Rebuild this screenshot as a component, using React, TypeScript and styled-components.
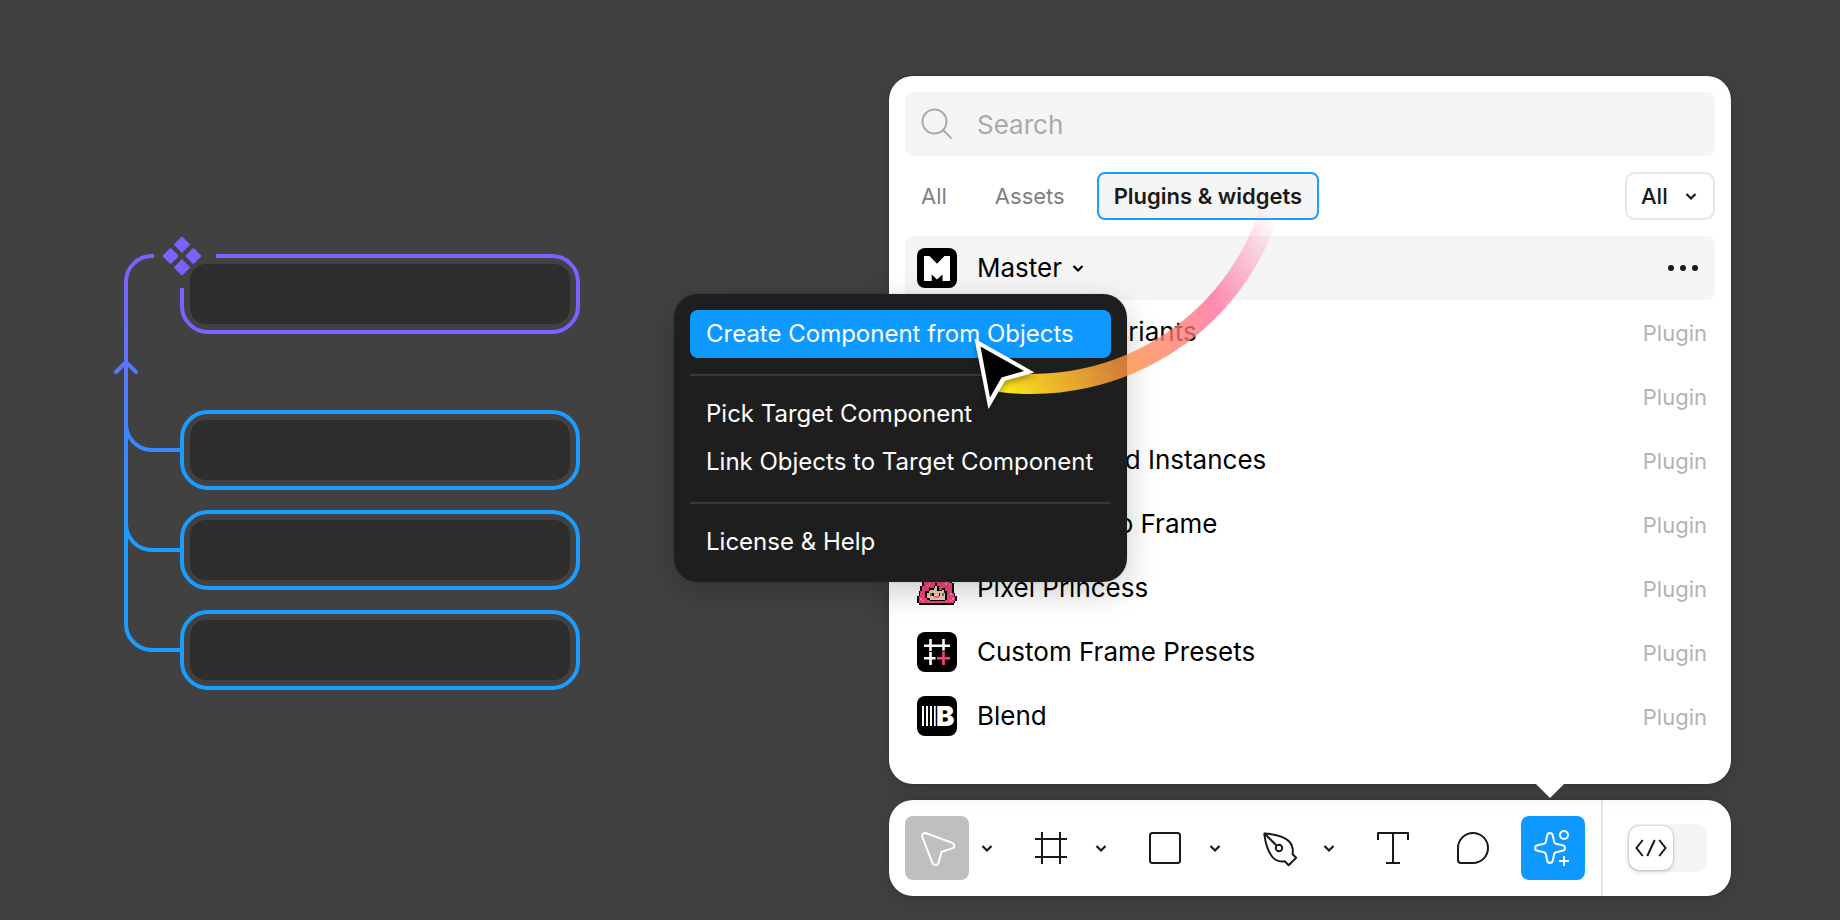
import React from "react";
import styled, { createGlobalStyle, css } from "styled-components";

const GlobalStyle = createGlobalStyle`
  *, *::before, *::after { box-sizing: border-box; }
  body {
    margin: 0;
    background: #414141;
    font-family: Inter, "Liberation Sans", sans-serif;
    color: #000;
  }
  button, input, select { font: inherit; color: inherit; }
`;

const Page = styled.main`
  display: grid;
  grid-template-columns: minmax(0, 466px) minmax(0, 842px);
  justify-content: space-between;
  align-items: start;
  min-height: 100vh;
  padding: 76px 109px 24px 114px;
`;

/* ---------- component tree ---------- */

const Tree = styled.section`
  display: flex;
  margin-top: 160px;
`;

const Connectors = styled.svg`
  flex: none;
  width: 66px;
  height: 454px;
`;

const Instances = styled.div`
  flex: 1;
  display: flex;
  flex-direction: column;
  gap: 20px;
  padding-top: 18px;
`;

const Outline = styled.div<{ $main?: boolean }>`
  position: relative;
  height: 80px;
  padding: 6px;
  border: 4px solid #1a9dff;
  border-radius: 28px;

  ${(p) =>
    p.$main &&
    css`
      margin-bottom: 56px;
      border-color: #7b61ff;

      &::before {
        content: "";
        position: absolute;
        left: -4px;
        top: -4px;
        width: 36px;
        height: 34px;
        background: #414141;
      }
    `}
`;

const Slot = styled.div`
  position: relative;
  height: 60px;
  border-radius: 16px;
  background: #2e2e2e;
`;

const ComponentMark = styled.svg`
  position: absolute;
  left: -22px;
  top: -22px;
  width: 40px;
  height: 40px;
`;

function ComponentTree() {
  return (
    <Tree aria-label="Component tree">
      <Connectors viewBox="0 0 66 454" fill="none" stroke="url(#link)" strokeWidth="4">
        <defs>
          <linearGradient id="link" gradientUnits="userSpaceOnUse" x1="0" y1="34" x2="0" y2="304">
            <stop stopColor="#7b61ff" />
            <stop offset="1" stopColor="#1a9dff" />
          </linearGradient>
        </defs>
        <path d="M40 20H38A26 26 0 0 0 12 46V388A26 26 0 0 0 38 414H66" />
        <path d="M12 188A26 26 0 0 0 38 214H66" />
        <path d="M12 288A26 26 0 0 0 38 314H66" />
        <path d="M2 136L12 126L22 136" strokeLinecap="round" />
      </Connectors>
      <Instances>
        <Outline $main>
          <Slot />
          <ComponentMark viewBox="-20 -20 40 40" fill="#7b61ff">
            <path d="M0-19.700 8.300-11.400 0-3.100-8.300-11.400ZM0 3.100 8.300 11.400 0 19.700-8.300 11.400ZM-11.400-8.300-3.100 0-11.400 8.300-19.700 0ZM11.400-8.300 19.700 0 11.400 8.300 3.100 0Z" />
          </ComponentMark>
        </Outline>
        <Outline><Slot /></Outline>
        <Outline><Slot /></Outline>
        <Outline><Slot /></Outline>
      </Instances>
    </Tree>
  );
}

/* ---------- plugin browser ---------- */

const Workspace = styled.div`
  position: relative;
  display: flex;
  flex-direction: column;
  gap: 16px;
`;

const surface = css`
  background: #fff;
  border-radius: 24px;
  box-shadow: 0 0 2px rgba(0, 0, 0, 0.3), 0 4px 24px rgba(0, 0, 0, 0.15);
`;

const Panel = styled.section`
  ${surface}
  position: relative;
  padding: 16px 16px 36px;

  &::after {
    content: "";
    position: absolute;
    top: 100%;
    right: 167px;
    border: 14px solid transparent;
    border-bottom: 0;
    border-top-color: #fff;
  }
`;

const SearchField = styled.label`
  display: flex;
  align-items: center;
  gap: 20px;
  height: 64px;
  padding: 0 12px;
  border-radius: 8px;
  background: #f5f5f5;
`;

const SearchInput = styled.input`
  flex: 1;
  min-width: 0;
  padding: 2px 0 0;
  border: 0;
  outline: 0;
  background: none;
  font-size: 26px;
  line-height: 32px;
  &::placeholder { color: #aaa; opacity: 1; }
`;

const Filters = styled.div`
  display: flex;
  align-items: center;
  gap: 16px;
  margin: 16px 0;
`;

const Tab = styled.button<{ $active?: boolean }>`
  height: 48px;
  padding: 0 ${(p) => (p.$active ? 15 : 14)}px;
  border: 2px solid ${(p) => (p.$active ? "#1a9dff" : "transparent")};
  border-radius: 8px;
  background: ${(p) => (p.$active ? "#f5f5f5" : "none")};
  color: ${(p) => (p.$active ? "#1a1a1a" : "#808080")};
  font-size: 22px;
  font-weight: ${(p) => (p.$active ? 600 : 400)};
  line-height: 28px;
`;

const TypeFilter = styled.div`
  display: flex;
  align-items: center;
  position: relative;
  margin-left: auto;
  color: #1a1a1a;

  svg { position: absolute; right: 8px; pointer-events: none; }
`;

const TypeSelect = styled.select`
  appearance: none;
  width: 90px;
  height: 48px;
  padding: 0 14px;
  border: 2px solid #e6e6e6;
  border-radius: 10px;
  background: #fff;
  font-size: 22px;
  font-weight: 500;
`;

const List = styled.ul`
  margin: 0;
  padding: 0;
  list-style: none;
`;

const Row = styled.li<{ $selected?: boolean }>`
  display: flex;
  align-items: center;
  gap: 20px;
  height: 64px;
  padding: 0 8px 0 12px;
  border-radius: 8px;
  background: ${(p) => (p.$selected ? "#f5f5f5" : "none")};
`;

const PluginName = styled.span`
  flex: 1;
  display: flex;
  align-items: center;
  font-size: 26px;
  line-height: 32px;
`;

const Kind = styled.span`
  padding-top: 2px;
  color: #b3b3b3;
  font-size: 22px;
  line-height: 28px;
`;

const MoreButton = styled.button`
  display: flex;
  padding: 0;
  border: 0;
  background: none;
`;

const Chevron = ({ size = 32 }: { size?: number }) => (
  <svg width={size} height={size} viewBox="0 0 32 32" fill="none" stroke="currentColor" strokeWidth="2.200" aria-hidden="true">
    <path d="M11.500 14 16 18.500 20.500 14" />
  </svg>
);

const Tile = ({ children }: { children?: React.ReactNode }) => (
  <svg width="40" height="40" viewBox="0 0 40 40" aria-hidden="true">
    <rect width="40" height="40" rx="8" />
    {children}
  </svg>
);

const MasterIcon = () => (
  <Tile>
    <rect x="7" y="8" width="26" height="25" fill="#fff" />
    <path d="M12 7.500H28L20 15.700ZM14.700 33.500V26.500L20 31.500 25.500 26.500V33.500Z" />
  </Tile>
);

const PresetsIcon = () => (
  <Tile>
    <g fill="none" stroke="#fff" strokeWidth="2.600">
      <path d="M13.500 7V19M13.500 20V33M7 13.700H33M26.500 7V18.500M7 26.200H18.500" />
      <path d="M26.500 19.500V33M20 26.200H33" stroke="#ff3e6c" />
    </g>
  </Tile>
);

const BlendIcon = () => (
  <Tile>
    <path d="M5 10H7V30H5ZM9 10H11V30H9ZM13 10H15V30H13ZM17 10H18.700V30H17Z" fill="#fff" />
    <text x="18.900" y="30" fontSize="27.500" fontWeight="900" fill="#fff" fontFamily="Inter, sans-serif">B</text>
  </Tile>
);

/* Sprite rows: k outline, p hair, l highlight, s skin, g eyes, m mouth. */
const sprite = [
  "........kkkkkkkk........",
  "......kkppppppppkk......",
  ".....kppppppppppppk.....",
  ".....kpplpppppplppk.....",
  "....kpplppppppppplpk....",
  "....kppppppppppppppk....",
  "...kpppppppppppppppk....",
  "...kppppppppppppppppk...",
  "...kppplppppppppplppk...",
  "...kppplpppkppppplpppk..",
  "...kpplppppkppppppplpk..",
  "..kpppppppkskppppppppk..",
  "..kppppkkksskppkkppppk..",
  "..kppppksssskkkskppppk..",
  ".kpppkkssssssssskkpppk..",
  ".kpppkssgksssksgskpplpk.",
  ".kpppkssgksssksgskppppk.",
  "kppppkssssmmmsssskpppppk",
  "kplpppkkssssssssskppplpk",
  "kpplppppkkkkkkkkkppplppk",
  "kpppppppppppppppppppppk.",
  ".kkkkkkkkkkkkkkkkkkkkk..",
];
const spriteColors: Record<string, string> = {
  k: "#000", p: "#f0457d", l: "#ff86ae", s: "#f3cdb0", g: "#2f9a4a", m: "#ff6b8a",
};

const PrincessIcon = () => (
  <svg width="40" height="40" viewBox="0 0 24 24" shapeRendering="crispEdges" aria-hidden="true">
    {sprite.flatMap((line, y) =>
      [...line].map((c, x) =>
        c === "." ? null : <rect key={`${x}-${y}`} x={x} y={y} width="1" height="1" fill={spriteColors[c]} />
      )
    )}
  </svg>
);

const plugins = [
  { name: "Compare Variants", icon: <Tile /> },
  { name: "Autoflow", icon: <Tile /> },
  { name: "Swap Nested Instances", icon: <Tile /> },
  { name: "Add Layer to Frame", icon: <Tile /> },
  { name: "Pixel Princess", icon: <PrincessIcon /> },
  { name: "Custom Frame Presets", icon: <PresetsIcon /> },
  { name: "Blend", icon: <BlendIcon /> },
];

function PluginPanel() {
  return (
    <Panel aria-label="Actions">
      <SearchField>
        <svg width="40" height="40" viewBox="0 0 40 40" fill="none" stroke="#aaa" strokeWidth="2" aria-hidden="true">
          <circle cx="17.500" cy="17.500" r="12" />
          <path d="M26 26 34.500 34.500" />
        </svg>
        <SearchInput type="search" placeholder="Search" aria-label="Search" />
      </SearchField>
      <Filters>
        <Tab>All</Tab>
        <Tab>Assets</Tab>
        <Tab $active aria-pressed="true">Plugins &amp; widgets</Tab>
        <TypeFilter>
          <TypeSelect aria-label="Type"><option>All</option></TypeSelect>
          <Chevron />
        </TypeFilter>
      </Filters>
      <List>
        <Row $selected>
          <MasterIcon />
          <PluginName>Master<Chevron /></PluginName>
          <MoreButton aria-label="More">
            <svg width="48" height="32" viewBox="0 0 48 32" fill="#1a1a1a">
              <circle cx="12" cy="16" r="3" /><circle cx="24" cy="16" r="3" /><circle cx="36" cy="16" r="3" />
            </svg>
          </MoreButton>
        </Row>
        {plugins.map((p) => (
          <Row key={p.name}>
            {p.icon}
            <PluginName>{p.name}</PluginName>
            <Kind>Plugin</Kind>
          </Row>
        ))}
      </List>
    </Panel>
  );
}

/* ---------- toolbar ---------- */

const Bar = styled.nav`
  ${surface}
  display: flex;
  align-items: stretch;
  height: 96px;
`;

const Tools = styled.div`
  flex: 1;
  display: flex;
  align-items: center;
  gap: 16px;
  padding: 16px;
`;

const ToolGroup = styled.div`
  display: flex;
  align-items: center;
  gap: 2px;
`;

const ToolButton = styled.button<{ $fill?: string }>`
  display: flex;
  width: 64px;
  height: 64px;
  padding: 0;
  border: 0;
  border-radius: 8px;
  background: ${(p) => p.$fill ?? "none"};
  color: ${(p) => (p.$fill ? "#fff" : "#1a1a1a")};
`;

const MenuButton = styled.button`
  display: flex;
  padding: 0;
  border: 0;
  background: none;
  color: #1a1a1a;
`;

const ModeSection = styled.div`
  display: flex;
  align-items: center;
  padding: 0 24px;
  border-left: 2px solid #e6e6e6;
`;

const ModeSwitch = styled.button`
  display: flex;
  width: 80px;
  height: 48px;
  padding: 2px;
  border: 0;
  border-radius: 12px;
  background: #f5f5f5;
`;

const Thumb = styled.span`
  display: flex;
  width: 44px;
  height: 44px;
  border-radius: 10px;
  background: #fff;
  color: #1a1a1a;
  box-shadow: 0 0 2px rgba(0, 0, 0, 0.3), 0 2px 5px rgba(0, 0, 0, 0.15);
`;

const ToolIcon = ({ children }: { children: React.ReactNode }) => (
  <svg width="64" height="64" viewBox="0 0 64 64" fill="none" stroke="currentColor" strokeWidth="2" strokeLinejoin="round" aria-hidden="true">
    {children}
  </svg>
);

const tools = [
  {
    label: "Move", menu: true, fill: "#bfbfbf",
    art: <path d="M21.400 17.200 47.200 26.900C50 28 50 31.600 47.200 32.400L36.600 35.800 33.600 46.600C32.600 49.800 28.600 49.900 27.400 46.900L17.300 20.900C16.300 18.300 18.800 16.200 21.400 17.200Z" />,
  },
  { label: "Frame", menu: true, art: <path d="M23 16V48M41 16V48M16 23H48M16 41H48" /> },
  { label: "Rectangle", menu: true, art: <rect x="17" y="17" width="30" height="30" rx="2.500" /> },
  {
    label: "Pen", menu: true,
    art: (
      <>
        <path d="M18.600 17.400C30 18.500 38 21 42 25.300 46 29.500 46.200 34 45.600 38.200L49.200 41.800 41.600 49.200 37.800 45.300C32 46.300 27.500 43.800 25 40.500 20.500 34.500 18.500 27 17.400 18.600 17.200 17.600 17.600 17.200 18.600 17.400Z" />
        <circle cx="32" cy="32" r="3.200" />
        <path d="M18 18 29.500 29.500" />
      </>
    ),
  },
  { label: "Text", art: <path d="M17 24V17H47V24M32 17V47M25 47H39" /> },
  { label: "Comment", art: <path d="M32 17A15 15 0 0 1 32 47H20A3 3 0 0 1 17 44V32A15 15 0 0 1 32 17Z" /> },
  {
    label: "Actions", fill: "#0d99ff",
    art: (
      <>
        <path d="M26.200 19.500C26.800 16.300 31.200 16.300 31.800 19.500L33.200 26C33.500 27.200 34 27.500 35 27.800L41.500 29.200C44.700 29.800 44.700 34.200 41.500 34.800L35 36.200C34 36.500 33.500 36.800 33.200 38L31.800 44.500C31.200 47.700 26.800 47.700 26.200 44.500L24.800 38C24.500 36.800 24 36.500 23 36.200L16.500 34.800C13.300 34.200 13.300 29.800 16.500 29.200L23 27.800C24 27.500 24.500 27.200 24.800 26Z" />
        <circle cx="43" cy="19" r="4" />
        <path d="M43 40V50M38 45H48" />
      </>
    ),
  },
];

function Toolbar() {
  return (
    <Bar aria-label="Toolbar">
      <Tools>
        {tools.map((t) => (
          <ToolGroup key={t.label}>
            <ToolButton $fill={t.fill} aria-label={t.label}><ToolIcon>{t.art}</ToolIcon></ToolButton>
            {t.menu && <MenuButton aria-label={`${t.label} tools`}><Chevron /></MenuButton>}
          </ToolGroup>
        ))}
      </Tools>
      <ModeSection>
        <ModeSwitch role="switch" aria-checked="false" aria-label="Dev Mode">
          <Thumb>
            <svg width="44" height="44" viewBox="0 0 44 44" fill="none" stroke="currentColor" strokeWidth="2" aria-hidden="true">
              <path d="M13.700 14 7.500 22 13.700 30M25.700 14 18.300 30M30.300 14 36.500 22 30.300 30" />
            </svg>
          </Thumb>
        </ModeSwitch>
      </ModeSection>
    </Bar>
  );
}

/* ---------- context menu, trail and pointer ---------- */

const Menu = styled.div`
  position: absolute;
  left: -215px;
  top: 218px;
  width: 453px;
  padding: 16px;
  border-radius: 24px;
  background: #1e1e1e;
  box-shadow: 0 0 2px rgba(0, 0, 0, 0.15), 0 10px 32px rgba(0, 0, 0, 0.2);
`;

const MenuItem = styled.button<{ $active?: boolean }>`
  display: block;
  width: 100%;
  height: 48px;
  padding: 0 16px;
  border: 0;
  border-radius: 8px;
  background: ${(p) => (p.$active ? "#0d99ff" : "none")};
  color: #fff;
  font-size: 24px;
  line-height: 32px;
  text-align: left;
  white-space: nowrap;
`;

const Separator = styled.hr`
  height: 2px;
  margin: 16px 0 14px;
  border: 0;
  background: #383838;
`;

const Pointer = styled.svg`
  position: absolute;
  left: 71px;
  top: 114px;
  width: 330px;
  height: 240px;
  pointer-events: none;
`;

function PointerTrail() {
  return (
    <Pointer viewBox="960 190 330 240" aria-hidden="true">
      <defs>
        <linearGradient id="trail" gradientUnits="userSpaceOnUse" x1="1000" y1="385" x2="1268" y2="210">
          <stop stopColor="#fbe619" />
          <stop offset="0.365" stopColor="#ff9044" stopOpacity="0.800" />
          <stop offset="0.700" stopColor="#ff6594" stopOpacity="0.750" />
          <stop offset="1" stopColor="#ff6594" stopOpacity="0" />
        </linearGradient>
        <filter id="lift" x="-30%" y="-30%" width="160%" height="160%">
          <feDropShadow dx="0" dy="3" stdDeviation="3" floodOpacity="0.350" />
        </filter>
      </defs>
      <path d="M1000 382A250 250 0 0 0 1273 200" fill="none" stroke="url(#trail)" strokeWidth="20" />
      <g filter="url(#lift)">
        <path d="M974.500 338.500 1034.500 372.500 1005 380.500 988.500 409Z" fill="#fff" />
        <path d="M980.500 346.500 1024 371 1001.500 377.500 990 397.500Z" />
      </g>
    </Pointer>
  );
}

export default function App() {
  return (
    <Page>
      <GlobalStyle />
      <ComponentTree />
      <Workspace>
        <PluginPanel />
        <Toolbar />
        <Menu role="menu">
          <MenuItem $active role="menuitem">Create Component from Objects</MenuItem>
          <Separator />
          <MenuItem role="menuitem">Pick Target Component</MenuItem>
          <MenuItem role="menuitem">Link Objects to Target Component</MenuItem>
          <Separator />
          <MenuItem role="menuitem">License &amp; Help</MenuItem>
        </Menu>
        <PointerTrail />
      </Workspace>
    </Page>
  );
}
